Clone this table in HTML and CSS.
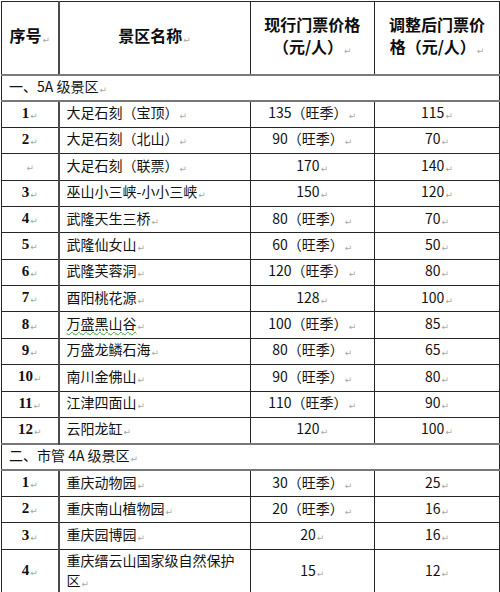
FILE: index.html
```html
<!DOCTYPE html>
<html lang="zh-CN">
<head>
<meta charset="utf-8">
<title>重庆景区门票价格调整表</title>
<link rel="stylesheet" href="styles.css">
</head>
<body>
<table class="price-table">
  <colgroup>
    <col class="c-no">
    <col class="c-name">
    <col class="c-now">
    <col class="c-new">
  </colgroup>
  <thead>
    <tr class="head">
      <th class="no">序号<span class="pm">↵</span></th>
      <th>景区名称<span class="pm">↵</span></th>
      <th>现行门票价格<br>（元/人）<span class="pm">↵</span></th>
      <th>调整后门票价<br>格（元/人）<span class="pm">↵</span></th>
    </tr>
  </thead>
  <tbody>
    <tr class="section"><td colspan="4">一、5A 级景区<span class="pm">↵</span></td></tr>
    <tr><td class="no">1<span class="pm">↵</span></td><td class="name">大足石刻（宝顶）<span class="pm">↵</span></td><td class="num">135（旺季）<span class="pm">↵</span></td><td class="num">115<span class="pm">↵</span></td></tr>
    <tr><td class="no">2<span class="pm">↵</span></td><td class="name">大足石刻（北山）<span class="pm">↵</span></td><td class="num">90（旺季）<span class="pm">↵</span></td><td class="num">70<span class="pm">↵</span></td></tr>
    <tr><td class="no"><span class="pm">↵</span></td><td class="name">大足石刻（联票）<span class="pm">↵</span></td><td class="num">170<span class="pm">↵</span></td><td class="num">140<span class="pm">↵</span></td></tr>
    <tr><td class="no">3<span class="pm">↵</span></td><td class="name">巫山小三峡-小小三峡<span class="pm">↵</span></td><td class="num">150<span class="pm">↵</span></td><td class="num">120<span class="pm">↵</span></td></tr>
    <tr><td class="no">4<span class="pm">↵</span></td><td class="name">武隆天生三桥<span class="pm">↵</span></td><td class="num">80（旺季）<span class="pm">↵</span></td><td class="num">70<span class="pm">↵</span></td></tr>
    <tr><td class="no">5<span class="pm">↵</span></td><td class="name">武隆仙女山<span class="pm">↵</span></td><td class="num">60（旺季）<span class="pm">↵</span></td><td class="num">50<span class="pm">↵</span></td></tr>
    <tr><td class="no">6<span class="pm">↵</span></td><td class="name">武隆芙蓉洞<span class="pm">↵</span></td><td class="num">120（旺季）<span class="pm">↵</span></td><td class="num">80<span class="pm">↵</span></td></tr>
    <tr><td class="no">7<span class="pm">↵</span></td><td class="name">酉阳桃花源<span class="pm">↵</span></td><td class="num">128<span class="pm">↵</span></td><td class="num">100<span class="pm">↵</span></td></tr>
    <tr><td class="no">8<span class="pm">↵</span></td><td class="name"><span class="spell">万盛黑山谷</span><span class="pm">↵</span></td><td class="num">100（旺季）<span class="pm">↵</span></td><td class="num">85<span class="pm">↵</span></td></tr>
    <tr><td class="no">9<span class="pm">↵</span></td><td class="name">万盛龙鳞石海<span class="pm">↵</span></td><td class="num">80（旺季）<span class="pm">↵</span></td><td class="num">65<span class="pm">↵</span></td></tr>
    <tr><td class="no">10<span class="pm">↵</span></td><td class="name">南川金佛山<span class="pm">↵</span></td><td class="num">90（旺季）<span class="pm">↵</span></td><td class="num">80<span class="pm">↵</span></td></tr>
    <tr><td class="no">11<span class="pm">↵</span></td><td class="name">江津四面山<span class="pm">↵</span></td><td class="num">110（旺季）<span class="pm">↵</span></td><td class="num">90<span class="pm">↵</span></td></tr>
    <tr><td class="no">12<span class="pm">↵</span></td><td class="name">云阳龙缸<span class="pm">↵</span></td><td class="num">120<span class="pm">↵</span></td><td class="num">100<span class="pm">↵</span></td></tr>
    <tr class="section"><td colspan="4">二、市管 4A 级景区<span class="pm">↵</span></td></tr>
    <tr><td class="no">1<span class="pm">↵</span></td><td class="name">重庆动物园<span class="pm">↵</span></td><td class="num">30（旺季）<span class="pm">↵</span></td><td class="num">25<span class="pm">↵</span></td></tr>
    <tr><td class="no">2<span class="pm">↵</span></td><td class="name">重庆南山植物园<span class="pm">↵</span></td><td class="num">20（旺季）<span class="pm">↵</span></td><td class="num">16<span class="pm">↵</span></td></tr>
    <tr><td class="no">3<span class="pm">↵</span></td><td class="name">重庆园博园<span class="pm">↵</span></td><td class="num">20<span class="pm">↵</span></td><td class="num">16<span class="pm">↵</span></td></tr>
    <tr class="tall"><td class="no">4<span class="pm">↵</span></td><td class="name">重庆缙云山国家级自然保护<br>区<span class="pm">↵</span></td><td class="num">15<span class="pm">↵</span></td><td class="num">12<span class="pm">↵</span></td></tr>
  </tbody>
</table>
</body>
</html>
```
FILE: styles.css
```css
html, body {
  margin: 0;
  padding: 0;
  background: #ffffff;
}

body {
  padding: 1px 0 0 1px;
  font-family: "Noto Sans CJK SC", "Noto Sans", sans-serif;
  color: #111;
}

.price-table {
  border-collapse: collapse;
  table-layout: fixed;
  width: 498px;
  font-size: 14px;
}

.c-no { width: 57px; }
.c-name { width: 191.5px; }
.c-now { width: 124.5px; }
.c-new { width: 125px; }

.price-table th,
.price-table td {
  border: 1px solid #262626;
  padding: 0 4px;
  vertical-align: middle;
  line-height: 18px;
  overflow: hidden;
}

.price-table td.no,
.price-table th.no {
  border-right: 2px solid #4a4a4a;
}

.head {
  height: 73px;
}

.head th {
  font-size: 16px;
  font-weight: 700;
  line-height: 22px;
  text-align: center;
  border-bottom: 2px solid #7a7a7a;
  color: #0c0c0c;
}

.price-table tbody tr {
  height: 26.38px;
}

.price-table tbody tr.tall {
  height: 40px;
}

.price-table tr.tall td {
  line-height: 20px;
}

.section td {
  text-align: left;
  padding-left: 7px;
  border-top: 2px solid #777;
  border-bottom: 2px solid #777;
}

td.no {
  text-align: center;
  font-family: "Liberation Serif", "DejaVu Serif", serif;
  font-weight: 700;
  font-size: 15px;
}

td.name {
  text-align: left;
  padding-left: 7px;
  padding-right: 5px;
}

td.num {
  text-align: center;
}

.pm {
  font-family: "DejaVu Sans", sans-serif;
  font-weight: 400;
  font-size: 9px;
  color: #a8a8a8;
  margin-left: 1px;
  vertical-align: -1px;
}

.spell {
  text-decoration: underline wavy #3c9a3c;
  text-decoration-thickness: 1px;
  text-underline-offset: 2px;
}
```
